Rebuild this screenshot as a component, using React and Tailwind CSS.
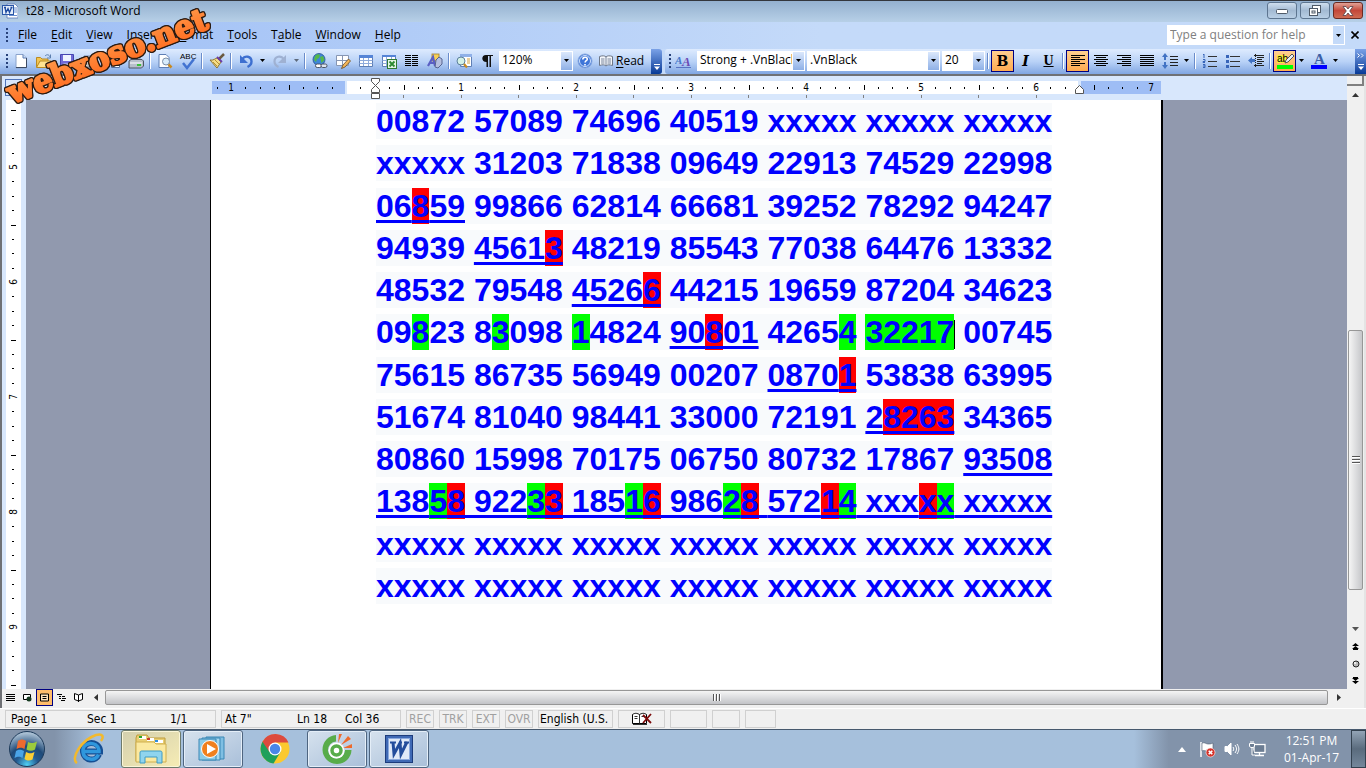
import React from 'react';

const Red = ({ children }) => <span className="bg-[#ff0000]">{children}</span>;
const Green = ({ children }) => <span className="bg-[#00ff00]">{children}</span>;
const Under = ({ children }) => (
  <span className="underline decoration-[3px] underline-offset-[3px] [text-decoration-skip-ink:none]">{children}</span>
);

const LINES = [
  <>00872 57089 74696 40519 xxxxx xxxxx xxxxx</>,
  <>xxxxx 31203 71838 09649 22913 74529 22998</>,
  <><Under>06<Red>8</Red>59</Under> 99866 62814 66681 39252 78292 94247</>,
  <>94939 <Under>4561<Red>3</Red></Under> 48219 85543 77038 64476 13332</>,
  <>48532 79548 <Under>4526<Red>6</Red></Under> 44215 19659 87204 34623</>,
  <>
    09<Green>8</Green>23 8<Green>3</Green>098 <Green>1</Green>4824 <Under>90<Red>8</Red>01</Under> 4265<Green>4</Green>{' '}
    <Green>32217</Green><span className="-mr-px inline-block h-[29px] w-px bg-black align-[-6px]" /> 00745
  </>,
  <>75615 86735 56949 00207 <Under>0870<Red>1</Red></Under> 53838 63995</>,
  <>51674 81040 98441 33000 72191 <Under>2<Red>8263</Red></Under> 34365</>,
  <>80860 15998 70175 06750 80732 17867 <Under>93508</Under></>,
  <Under>
    138<Green>5</Green><Red>8</Red> 922<Green>3</Green><Red>3</Red> 185<Green>1</Green><Red>6</Red> 986<Green>2</Green><Red>8</Red>{' '}
    572<Red>1</Red><Green>4</Green> xxx<Red>x</Red><Green>x</Green> xxxxx
  </Under>,
  <>xxxxx xxxxx xxxxx xxxxx xxxxx xxxxx xxxxx</>,
  <>xxxxx xxxxx xxxxx xxxxx xxxxx xxxxx xxxxx</>,
];

/* ---------- icons ---------- */

const Icon = ({ children, size = 16 }) => (
  <svg width={size} height={size} viewBox="0 0 16 16" fill="none" aria-hidden="true" className="shrink-0">
    {children}
  </svg>
);

const WordIcon = ({ size = 16 }) => (
  <Icon size={size}>
    <path d="M5 1h8l3 3v11H5z" fill="#fff" stroke="#5b7ab8" strokeWidth=".8" />
    <path d="M12 5h3M12 7h3M12 9h3M7 12.500h8" stroke="#6a8fd0" />
    <rect x=".5" y="2.500" width="11" height="9" fill="#e4edfb" stroke="#2b57a8" />
    <path d="M2 4.500h2M3 4.500l1 5 2-4 1.500 4 2-5M8.500 4.500h2" stroke="#1d4aa0" strokeWidth="1.300" />
  </Icon>
);

const NewDoc = () => (
  <Icon>
    <path d="M3 1.500h7l3.500 3.500v10H3z" fill="#fff" stroke="#8aa3cc" />
    <path d="M10 1.500V5h3.500" fill="#cbdcf5" stroke="#5f7fb5" />
    <path d="M13.500 5v9.500H3" stroke="#3d4a63" />
  </Icon>
);
const OpenFolder = () => (
  <Icon>
    <path d="M.5 14V4.500h4L6 6h6v3" fill="#f3c552" stroke="#b98a22" />
    <path d="M.5 14.500L4 8h11.500L12 14.500z" fill="#ffe391" stroke="#b98a22" />
    <path d="M9 3c2-2 4-1.500 5 1M14.500 1.500V5H11" stroke="#5c7fae" />
  </Icon>
);
const Save = () => (
  <Icon>
    <path d="M1.500 1.500h13v13h-12l-1-1z" fill="#6f6ad6" stroke="#4545b0" />
    <path d="M4 2h8v6H4z" fill="#eef3ff" />
    <path d="M4.500 10.500h7v4h-7z" fill="#c7cdea" />
    <path d="M9 11h2v3H9z" fill="#35359a" />
  </Icon>
);
const Mail = () => (
  <Icon>
    <path d="M2 3h9v11H2z" fill="#fff" stroke="#7086b0" />
    <path d="M6 8h9v6H6z" fill="#f5f0df" stroke="#8a8a8a" />
    <path d="M6 8l4.500 4L15 8" stroke="#8a8a8a" />
    <circle cx="12" cy="7" r="2.500" fill="#d83a20" />
  </Icon>
);
const Copies = () => (
  <Icon>
    <path d="M1.500 2.500h8v9h-8z" fill="#fff" stroke="#55709f" />
    <path d="M6.500 5.500h8v9h-8z" fill="#fff" stroke="#55709f" />
    <path d="M8 8.500h5M8 10.500h5M8 12.500h5" stroke="#5f8fe0" />
  </Icon>
);
const Printer = () => (
  <Icon>
    <path d="M5 1.500h8L11 8H3z" fill="#fff" stroke="#6b83ad" />
    <path d="M6 3.500h5M5.500 5.500h5" stroke="#8aa7dc" />
    <path d="M1 8l2-1.500h11L15.500 8v5l-2 2H1z" fill="#b7bfcb" stroke="#4d5564" />
    <path d="M2 10h12" stroke="#fff" />
    <path d="M9 12h4" stroke="#38c238" strokeWidth="2" />
  </Icon>
);
const Preview = () => (
  <Icon>
    <path d="M2 1.500h7L12 4.500v10H2z" fill="#fff" stroke="#5f7fb5" />
    <circle cx="9" cy="8.500" r="3.500" fill="#d9ecfb" stroke="#7d8fa6" />
    <path d="M11.500 11.500l3 3" stroke="#c98a20" strokeWidth="2.500" />
  </Icon>
);
const Spelling = () => (
  <svg width="18" height="18" viewBox="0 0 18 18" fill="none" aria-hidden="true">
    <text x="1" y="7" fontSize="8" fontFamily="Liberation Sans, sans-serif" fill="#000">ABC</text>
    <path d="M4 11l4 5 7-9" stroke="#4273d1" strokeWidth="2.500" />
  </svg>
);
const Brush = () => (
  <Icon>
    <path d="M15 1l-5 5" stroke="#6b5a3f" strokeWidth="2.500" />
    <path d="M1 7c3 1 6-2 7-2l4 4c-1 2-3 4-4 6z" fill="#f5dd8a" stroke="#8e7532" />
    <path d="M8 4l5 5" stroke="#6b3fa8" strokeWidth="1.800" />
    <path d="M4 9l4 4M6 7l4 4" stroke="#b8912f" />
  </Icon>
);
const Undo = () => (
  <Icon>
    <path d="M4 6.500c3-4.500 9.500-3.500 9.500 2 0 2.500-2 4.500-4 5.500" stroke="#3d6fd0" strokeWidth="2.400" />
    <path d="M2 2v8h8z" fill="#3d6fd0" />
  </Icon>
);
const Redo = () => (
  <Icon>
    <path d="M12 6.500C9 2 2.500 3 2.500 8.500c0 2.500 2 4.500 4 5.500" stroke="#9fb1d2" strokeWidth="2.200" />
    <path d="M14 2v8H6z" fill="#9fb1d2" />
  </Icon>
);
const Globe = () => (
  <Icon>
    <circle cx="7" cy="6.500" r="6" fill="#3f86d8" stroke="#23508f" strokeWidth=".8" />
    <path d="M3 3c2-2 4-2 5-1l-1 3-2 1-1 3-2-2zM8 4l3-1 1.500 4-3 3z" fill="#55b848" />
    <rect x="3.500" y="11" width="6" height="3.500" rx="1.700" fill="#fff" stroke="#4d5564" />
    <rect x="9" y="11" width="6" height="3.500" rx="1.700" fill="#dfe6f0" stroke="#4d5564" />
  </Icon>
);
const GridBase = () => (
  <>
    <path d="M1.500 2.500h13v11h-13z" fill="#fff" stroke="#5f7fb5" />
    <path d="M1.500 7.500h13M1.500 10.500h13M5.500 3v10M10.500 3v10" stroke="#8fabdb" />
  </>
);
const TablesBorders = () => (
  <Icon>
    <path d="M1.500 2.500h12v10h-12z" fill="#fff" stroke="#8796b3" />
    <path d="M1.500 7.500h12M7.500 3v9" stroke="#8796b3" />
    <path d="M13.500 6L8 12l-1.500 3.500L10 14l5.500-6z" fill="#f4b65a" stroke="#6b4a1d" strokeWidth=".8" />
  </Icon>
);
const TableIcon = () => (
  <Icon>
    <GridBase />
    <path d="M1 2h14v3H1z" fill="#5584d6" />
  </Icon>
);
const ExcelIcon = () => (
  <Icon>
    <GridBase />
    <path d="M1 2h14v2H1z" fill="#5584d6" />
    <rect x="6.500" y="6.500" width="9" height="9" fill="#e5f5e4" stroke="#2f7a33" />
    <path d="M8.500 8.500l5 5M13.500 8.500l-5 5" stroke="#2c8a31" strokeWidth="1.800" />
  </Icon>
);
const Columns = () => (
  <Icon>
    <path d="M1 2.500h6M1 4.500h6M1 6.500h6M1 8.500h6M1 10.500h6M1 12.500h6M8 2.500h6M8 4.500h6M8 6.500h6M8 8.500h6M8 10.500h6M8 12.500h6" stroke="#000" />
  </Icon>
);
const Drawing = () => (
  <Icon>
    <rect x="5" y="1" width="7" height="7" fill="#f6cf58" stroke="#a5822a" strokeWidth=".8" />
    <path d="M1 13L6 4l2 9M3 10h5" stroke="#5a5fc4" strokeWidth="2.200" />
    <path d="M9 7l3-3 3 2v5l-4 4-3-1z" fill="#b5bfdf" stroke="#56638f" />
  </Icon>
);
const DocMap = () => (
  <Icon>
    <path d="M4.500 1.500h11v12h-11z" fill="#fff" stroke="#5f7fb5" />
    <path d="M4 1h12v3H4z" fill="#8fb0e8" />
    <path d="M11 6h3M11 8h3M11 10h3" stroke="#d6a13b" />
    <circle cx="5" cy="8" r="4" fill="#d4f1e6" stroke="#5b7f9b" />
    <path d="M8 11l3 3.500" stroke="#c98a20" strokeWidth="2.200" />
  </Icon>
);
const Pilcrow = () => (
  <Icon>
    <path d="M7 2h7v1h-2v11h-1.500V3H9v11H7.500V9C2 9 2 2 7 2z" fill="#111" />
  </Icon>
);
const Help = () => (
  <Icon>
    <circle cx="8" cy="8" r="7" fill="#3f75d8" stroke="#8aa9de" />
    <circle cx="8" cy="8" r="5.500" stroke="#cfe0fb" />
    <path d="M5.800 6.500c0-3 4.500-3 4.500-.3 0 1.500-2.200 1.600-2.200 3.300M8 11v1.500" stroke="#fff" strokeWidth="1.600" />
  </Icon>
);
const Book = () => (
  <Icon>
    <path d="M1.500 3.500c3-1 5-1 6.500.5 1.500-1.500 3.500-1.500 6.500-.5v9c-3-1-5-1-6.500.5-1.500-1.500-3.500-1.500-6.500-.5z" fill="#f5f7fb" stroke="#6d7686" />
    <path d="M8 4v9M3 6h3.500M3 8h3.500M3 10h3.500M9.500 6H13M9.500 8H13M9.500 10H13" stroke="#78859b" />
  </Icon>
);
const StylesIcon = () => (
  <svg width="17" height="16" viewBox="0 0 17 16" fill="none" aria-hidden="true">
    <text x="0" y="11" fontSize="11" fontStyle="italic" fontWeight="bold" fontFamily="Liberation Serif, serif" fill="#4778c9">A</text>
    <text x="7" y="13" fontSize="13" fontStyle="italic" fontWeight="bold" fontFamily="Liberation Serif, serif" fill="#6c4bb5">A</text>
    <path d="M1 14.500h15" stroke="#5873c4" />
  </svg>
);
const AlignLeft = () => (
  <Icon><path d="M1 2.500h14M1 4.500h9M1 6.500h14M1 8.500h9M1 10.500h14M1 12.500h9" stroke="#000" /></Icon>
);
const AlignCenter = () => (
  <Icon><path d="M1 2.500h14M3 4.500h10M1 6.500h14M3 8.500h10M1 10.500h14M3 12.500h10" stroke="#000" /></Icon>
);
const AlignRight = () => (
  <Icon><path d="M1 2.500h14M6 4.500h9M1 6.500h14M6 8.500h9M1 10.500h14M6 12.500h9" stroke="#000" /></Icon>
);
const Justify = () => (
  <Icon><path d="M1 2.500h14M1 4.500h14M1 6.500h14M1 8.500h14M1 10.500h14M1 12.500h14" stroke="#000" /></Icon>
);
const LineSpacing = () => (
  <Icon>
    <path d="M3 0L0 4h2v3h2V4h2zM3 16l-3-4h2V9h2v3h2z" fill="#4273c4" />
    <path d="M8 3.500h8M8 6.500h8M8 9.500h8M8 12.500h8" stroke="#222" />
  </Icon>
);
const Numbering = () => (
  <Icon>
    <path d="M2 1v4M1 1.500h1M1 6.500h2v2H1v1h2M1 11.500h2v3H1M1 13h2" stroke="#3764b8" />
    <path d="M6 3.500h9M6 8.500h9M6 13.500h9" stroke="#333" />
  </Icon>
);
const Bullets = () => (
  <Icon>
    <path d="M1 2h3v3H1zM1 7h3v3H1zM1 12h3v3H1z" fill="#3764b8" />
    <path d="M5 3.500h10M5 8.500h10M5 13.500h10" stroke="#333" />
  </Icon>
);
const Outdent = () => (
  <Icon>
    <path d="M6 2.500h10M9 4.500h7M9 6.500h5M9 8.500h7M9 10.500h5M6 12.500h10" stroke="#222" />
    <path d="M7.500 1v14" stroke="#222" strokeDasharray="1 1" />
    <path d="M0 7.500L4 4v2h3v3H4v2z" fill="#4273c4" />
  </Icon>
);
const Highlighter = () => (
  <svg width="18" height="18" viewBox="0 0 18 18" fill="none" aria-hidden="true">
    <path d="M1 3h9v8H1z" fill="#f8f03a" />
    <text x="1" y="10" fontSize="10" fontFamily="Liberation Sans, sans-serif" fill="#000">ab</text>
    <path d="M16 2l-6 6-1 3 3-1 6-6z" fill="#e8edf5" stroke="#555" />
    <path d="M1 13h16v4H1z" fill="#00ff00" />
  </svg>
);
const FontColor = () => (
  <svg width="18" height="18" viewBox="0 0 18 18" fill="none" aria-hidden="true">
    <text x="4" y="12" fontSize="15" fontWeight="bold" fontFamily="Liberation Serif, serif" fill="#3c5fa6">A</text>
    <path d="M1 13h16v4H1z" fill="#0000ff" />
  </svg>
);
const Down = () => (
  <svg width="5" height="3" viewBox="0 0 5 3" aria-hidden="true"><path d="M0 0h5L2.500 3z" fill="#000" /></svg>
);

/* ---------- toolbar parts ---------- */

const Tool = ({ label, active, children }) => (
  <button
    aria-label={label}
    className={`flex h-[22px] w-[23px] shrink-0 items-center justify-center text-base ${active ? 'border border-[#000080] bg-gradient-to-b from-[#ffcf8f] to-[#ffab4f]' : ''}`}
  >
    {children}
  </button>
);
const Drop = ({ label, dim }) => (
  <button aria-label={label} className={`flex h-[22px] w-[11px] shrink-0 items-center justify-center ${dim ? 'opacity-50' : ''}`}><Down /></button>
);
const Sep = () => (
  <div className="flex w-[6px] shrink-0 justify-center"><div className="h-4 w-[2px] border-l border-[#6a8ccb] bg-white" /></div>
);
const Grip = () => (
  <div className="flex w-[3px] shrink-0 flex-col gap-[2px]">
    {[0, 1, 2, 3].map((i) => <div key={i} className="size-[2px] bg-[#27417a]" />)}
  </div>
);
const Combo = ({ label, value, width }) => (
  <div className={`relative h-5 shrink-0 ${width}`}>
    <select aria-label={label} className="block h-5 w-full appearance-none overflow-hidden bg-white pr-[13px] pb-[2px] pl-[3px] text-xs text-black">
      <option>{value}</option>
    </select>
    <span className="pointer-events-none absolute top-px right-px bottom-px flex w-[11px] items-center justify-center bg-gradient-to-b from-[#dbe8fc] to-[#8fb0e6]">
      <Down />
    </span>
  </div>
);

const MENU = [['', 'F', 'ile'], ['', 'E', 'dit'], ['', 'V', 'iew'], ['', 'I', 'nsert'], ['F', 'o', 'rmat'], ['', 'T', 'ools'], ['T', 'a', 'ble'], ['', 'W', 'indow'], ['', 'H', 'elp']];

function TitleBar() {
  return (
    <header className="flex h-[22px] items-start border-t border-[#33363c] bg-gradient-to-b from-[#94b0cf] to-[#b7d0e7] pl-[2px]">
      <div className="flex h-5 items-center gap-2">
        <WordIcon />
        <h1 className="text-xs">t28 - Microsoft Word</h1>
      </div>
      <div className="mt-px mr-[3px] ml-auto flex gap-[3px]">
        <button aria-label="Minimize" className="flex h-[17px] w-[30px] items-center justify-center rounded-[3px] border border-[#5d7590] bg-gradient-to-b from-[#cfdeee] via-[#a3bad3] to-[#b9cfe5]">
          <svg width="12" height="6" viewBox="0 0 12 6"><rect x=".5" y="1.500" width="11" height="4" rx="1" fill="#fff" stroke="#4f5a68" /></svg>
        </button>
        <button aria-label="Restore" className="flex h-[17px] w-[30px] items-center justify-center rounded-[3px] border border-[#5d7590] bg-gradient-to-b from-[#cfdeee] via-[#a3bad3] to-[#b9cfe5]">
          <svg width="12" height="12" viewBox="0 0 12 12" fill="#fff" stroke="#4f5a68">
            <rect x="3.500" y=".5" width="8" height="7" />
            <rect x=".5" y="3.500" width="8" height="7" />
            <rect x="3" y="6" width="3" height="2" />
          </svg>
        </button>
        <button aria-label="Close" className="flex h-[17px] w-[30px] items-center justify-center rounded-[3px] border border-[#6b2a22] bg-gradient-to-b from-[#e0a096] via-[#c3473a] to-[#cf6a52]">
          <svg width="12" height="10" viewBox="0 0 12 10"><path d="M1 .5h3l2 2.500 2-2.500h3L7.700 5 11 9.500H8L6 7 4 9.500H1L4.300 5z" fill="#fff" stroke="#564048" strokeWidth=".8" /></svg>
        </button>
      </div>
    </header>
  );
}

function MenuBar() {
  return (
    <nav className="flex h-[27px] items-center bg-gradient-to-r from-[#9ebef5] to-[#c4daf9] to-60% pb-px pl-[6px]">
      <Grip />
      <div className="ml-2 flex">
        {MENU.map(([a, b, c]) => (
          <button key={a + b + c} className="mr-3 px-px text-xs">{a}<span className="underline underline-offset-2">{b}</span>{c}</button>
        ))}
      </div>
      <div className="relative mr-[2px] ml-auto flex h-5 w-[178px]">
        <input aria-label="Type a question for help" placeholder="Type a question for help" className="w-full bg-white pl-[3px] text-xs placeholder:text-[#808080]" />
        <span className="absolute top-px right-px bottom-px flex w-[11px] items-center justify-center bg-[#c4daf9]"><Down /></span>
      </div>
      <button aria-label="Close document" className="mr-[3px] p-1">
        <svg width="8" height="8" viewBox="0 0 8 8"><path d="M.5 .5l7 7M7.500 .5l-7 7" stroke="#000" strokeWidth="1.600" /></svg>
      </button>
    </nav>
  );
}

function Toolbars() {
  return (
    <div className="flex h-[25px] bg-[#c4daf9]">
      <div role="toolbar" aria-label="Standard" className="flex w-[662px] shrink-0 items-center overflow-hidden rounded-r-[3px] bg-gradient-to-b from-[#deebfe] via-[#b9d2f7] to-[#81a6e2] pl-[6px]">
        <div className="flex items-center pb-[2px]">
          <Grip />
          <Tool label="New"><NewDoc /></Tool>
          <Tool label="Open"><OpenFolder /></Tool>
          <Tool label="Save"><Save /></Tool>
          <Tool label="Permission"><Mail /></Tool>
          <Tool label="E-mail"><Copies /></Tool>
          <Tool label="Print"><Printer /></Tool>
          <Sep />
          <Tool label="Print Preview"><Preview /></Tool>
          <Tool label="Spelling"><Spelling /></Tool>
          <Sep />
          <Tool label="Format Painter"><Brush /></Tool>
          <Sep />
          <Tool label="Undo"><Undo /></Tool>
          <Drop label="Undo list" />
          <Tool label="Redo"><Redo /></Tool>
          <Drop label="Redo list" dim />
          <Sep />
          <Tool label="Hyperlink"><Globe /></Tool>
          <Tool label="Tables and Borders"><TablesBorders /></Tool>
          <Tool label="Insert Table"><TableIcon /></Tool>
          <Tool label="Insert Worksheet"><ExcelIcon /></Tool>
          <Tool label="Columns"><Columns /></Tool>
          <Tool label="Drawing"><Drawing /></Tool>
          <Sep />
          <Tool label="Document Map"><DocMap /></Tool>
          <Tool label="Show Paragraph Marks"><Pilcrow /></Tool>
          <Combo label="Zoom" value="120%" width="w-[74px] ml-px" />
          <Tool label="Help"><Help /></Tool>
          <button className="ml-[2px] flex shrink-0 items-center gap-[2px] text-xs"><Book /><span><span className="underline underline-offset-2">R</span>ead</span></button>
        </div>
        <button aria-label="Standard options" className="ml-auto flex h-full w-[11px] shrink-0 items-end justify-center bg-gradient-to-b from-[#7ba2e7] to-[#063a97] pb-1">
          <svg width="6" height="6" viewBox="0 0 6 6"><path d="M0 .5h6" stroke="#fff" /><path d="M0 2.500h6L3 6z" fill="#fff" /></svg>
        </button>
      </div>
      <div role="toolbar" aria-label="Formatting" className="ml-[3px] flex flex-1 items-center overflow-hidden rounded-l-[3px] bg-gradient-to-b from-[#deebfe] via-[#b9d2f7] to-[#81a6e2] pl-1">
        <div className="flex items-center pb-[2px]">
          <Grip />
          <Tool label="Styles and Formatting"><StylesIcon /></Tool>
          <Combo label="Style" value="Strong + .VnBlack" width="w-[108px] ml-[2px]" />
          <Combo label="Font" value=".VnBlack" width="w-[133px] ml-[2px]" />
          <Combo label="Font Size" value="20" width="w-[43px] ml-[2px]" />
          <Sep />
          <Tool label="Bold" active><span className="font-['DejaVu_Serif',serif] text-sm font-bold">B</span></Tool>
          <Tool label="Italic"><span className="font-['DejaVu_Serif',serif] text-sm font-bold italic">I</span></Tool>
          <Tool label="Underline"><span className="font-['Liberation_Serif',serif] text-sm font-bold underline">U</span></Tool>
          <Sep />
          <Tool label="Align Left" active><AlignLeft /></Tool>
          <Tool label="Center"><AlignCenter /></Tool>
          <Tool label="Align Right"><AlignRight /></Tool>
          <Tool label="Justify"><Justify /></Tool>
          <Tool label="Line Spacing"><LineSpacing /></Tool>
          <Drop label="Line Spacing list" />
          <Sep />
          <Tool label="Numbering"><Numbering /></Tool>
          <Tool label="Bullets"><Bullets /></Tool>
          <Tool label="Decrease Indent"><Outdent /></Tool>
          <Sep />
          <Tool label="Highlight" active><Highlighter /></Tool>
          <Drop label="Highlight list" />
          <Tool label="Font Color"><FontColor /></Tool>
          <Drop label="Font Color list" />
        </div>
        <button aria-label="Formatting options" className="ml-auto flex h-full w-[11px] shrink-0 flex-col items-center justify-between bg-gradient-to-b from-[#7ba2e7] to-[#063a97] py-1">
          <svg width="7" height="5" viewBox="0 0 7 5" fill="none" stroke="#fff"><path d="M.5 .5l2 2-2 2M4 .5l2 2-2 2" /></svg>
          <svg width="6" height="6" viewBox="0 0 6 6"><path d="M0 .5h6" stroke="#fff" /><path d="M0 2.500h6L3 6z" fill="#fff" /></svg>
        </button>
      </div>
    </div>
  );
}

/* ---------- rulers: 115px to the inch, a tick each eighth ---------- */

const INCH = 115;

function HorizontalRuler() {
  const eighths = Array.from({ length: 66 }, (_, i) => i - 9);
  return (
    <svg width="953" height="24" viewBox="0 0 953 24" shapeRendering="crispEdges" className="shrink-0" aria-label="Horizontal ruler">
      <rect x="2" y="5" width="133" height="13" fill="#9ebdf5" />
      <rect x="137" y="5" width="731" height="13" fill="#fff" />
      <rect x="871" y="5" width="80" height="13" fill="#9ebdf5" />
      {eighths.map((i) => {
        const x = Math.round(136 + (i * INCH) / 8);
        // the indent markers and the margin edge hide the ticks under them
        if (i === 0 || x < 4 || x > 949 || (x > 155 && x < 172) || (x > 862 && x < 880)) return null;
        if (i % 8 === 0) {
          return <text key={i} x={x} y="15" textAnchor="middle" fontSize="10" fontFamily="DejaVu Sans Condensed, DejaVu Sans, sans-serif">{Math.abs(i / 8)}</text>;
        }
        return i % 4 === 0
          ? <rect key={i} x={x} y="9" width="1" height="5" />
          : <rect key={i} x={x} y="11" width="1" height="2" />;
      })}
      {Array.from({ length: 12 }, (_, i) => (
        <rect key={i} x={Math.round(193 + (i * INCH) / 2)} y="19" width="1" height="3" fill="#808080" />
      ))}
      <g fill="#fff" stroke="#555" shapeRendering="auto">
        <path d="M161.500 2.500h8v3l-4 4 4 4v3h-8v-3l4-4-4-4z" />
        <path d="M161.500 17.500h8v5h-8z" />
        <path d="M865.500 17.500v-4l4-4 4 4v4z" />
      </g>
    </svg>
  );
}

function VerticalRuler() {
  return (
    <div className="w-6 shrink-0 overflow-hidden bg-[#d8e7fc] pl-1">
      <div className="h-full w-[15px] bg-white">
        <svg width="15" height="588" viewBox="0 0 15 588" shapeRendering="crispEdges" aria-label="Vertical ruler">
          {Array.from({ length: 41 }, (_, i) => i - 4).map((i) => {
            const y = Math.round(67 + (i * INCH) / 8);
            if (i % 8 === 0) {
              return (
                <text key={i} transform={`translate(11 ${y}) rotate(-90)`} textAnchor="middle" fontSize="10" fontFamily="DejaVu Sans Condensed, DejaVu Sans, sans-serif">
                  {5 + i / 8}
                </text>
              );
            }
            return i % 4 === 0
              ? <rect key={i} x="5" y={y} width="5" height="1" />
              : <rect key={i} x="6" y={y} width="2" height="1" />;
          })}
        </svg>
      </div>
    </div>
  );
}

function VerticalScroll() {
  return (
    <div className="flex w-[17px] shrink-0 flex-col items-center bg-[#f0f0f0]">
      <div className="h-[10px] w-full border-r-2 border-b-2 border-[#808080] bg-[#f0f0f0]" />
      <button aria-label="Scroll up" className="flex h-[18px] w-full items-center justify-center">
        <svg width="7" height="4" viewBox="0 0 7 4"><path d="M0 4h7L3.500 0z" fill="#333" /></svg>
      </button>
      <div className="flex-[227]" />
      <div className="flex w-[15px] flex-[259] flex-col items-center justify-center gap-px rounded-[2px] border border-[#979797] bg-gradient-to-r from-[#f5f5f5] to-[#c6c7ca]">
        {[0, 1, 2].map((i) => <div key={i} className="h-[2px] w-2 border-b border-white bg-[#555]" />)}
      </div>
      <div className="flex-[30]" />
      <button aria-label="Scroll down" className="flex h-[18px] w-full items-center justify-center">
        <svg width="7" height="4" viewBox="0 0 7 4"><path d="M0 0h7L3.500 4z" fill="#555" /></svg>
      </button>
      <button aria-label="Previous page" className="flex h-[17px] items-center">
        <svg width="7" height="7" viewBox="0 0 7 7"><path d="M0 3h7L3.500 0zM0 6h7L3.500 3zM1 6h5v1H1z" /></svg>
      </button>
      <button aria-label="Select browse object" className="flex h-[17px] items-center">
        <svg width="8" height="8" viewBox="0 0 8 8"><circle cx="4" cy="4" r="3" fill="#bbb" stroke="#222" /><circle cx="3" cy="3" r="1" fill="#fff" /></svg>
      </button>
      <button aria-label="Next page" className="mb-[19px] flex h-[17px] items-center">
        <svg width="7" height="7" viewBox="0 0 7 7"><path d="M0 1h7L3.500 4zM0 4h7L3.500 7zM1 0h5v1H1z" /></svg>
      </button>
    </div>
  );
}

function HorizontalScroll() {
  return (
    <div className="flex h-[19px] shrink-0 items-start bg-[#f0f0f0]">
      <button aria-label="Normal view" className="flex size-[17px] items-center justify-center">
        <svg width="9" height="9" viewBox="0 0 9 9"><path d="M0 1.500h9M0 3.500h9M0 5.500h9M0 7.500h9" stroke="#000" /></svg>
      </button>
      <button aria-label="Web layout" className="flex size-[17px] items-center justify-center">
        <svg width="9" height="9" viewBox="0 0 9 9"><path d="M.5 1.500h7v5h-7z" fill="#fff" stroke="#000" /><circle cx="6" cy="6" r="2.500" fill="#163a20" /></svg>
      </button>
      <button aria-label="Print layout" className="flex size-[17px] items-center justify-center border border-[#000080] bg-[#ffbd6b]">
        <svg width="9" height="9" viewBox="0 0 9 9"><path d="M.5 1h8v7h-8z" fill="#ffe2bb" stroke="#000" /><path d="M2.500 3.500h4M2.500 5.500h4" stroke="#000" /></svg>
      </button>
      <button aria-label="Outline view" className="flex size-[17px] items-center justify-center">
        <svg width="9" height="9" viewBox="0 0 9 9"><path d="M0 1.500h5M2 3.500h2M5 3.500h3M2 5.500h2M5 5.500h4M4 7.500h4" stroke="#000" /></svg>
      </button>
      <button aria-label="Reading layout" className="flex size-[17px] items-center justify-center">
        <svg width="9" height="9" viewBox="0 0 9 9" fill="#fff" stroke="#000"><path d="M.5 .5l4 1.500 4-1.500v6l-4 1.500-4-1.500zM4.500 2v7" /></svg>
      </button>
      <button aria-label="Scroll left" className="flex size-[17px] items-center justify-center">
        <svg width="4" height="7" viewBox="0 0 4 7"><path d="M4 0v7L0 3.500z" fill="#333" /></svg>
      </button>
      <div className="mt-px ml-px flex h-[15px] flex-1 items-center justify-center gap-px rounded-[2px] border border-[#979797] bg-gradient-to-b from-[#f5f5f5] via-[#dcdddf] to-[#c2c3c7]">
        {[0, 1, 2].map((i) => <div key={i} className="h-[7px] w-[2px] border-r border-white bg-[#555]" />)}
      </div>
      <button aria-label="Scroll right" className="ml-[2px] flex size-[17px] items-center justify-center">
        <svg width="4" height="7" viewBox="0 0 4 7"><path d="M0 0v7l4-3.500z" fill="#333" /></svg>
      </button>
    </div>
  );
}

function StatusBar() {
  const box = 'flex h-[18px] shrink-0 items-center border border-[#d0d0d0]';
  return (
    <footer className="flex h-[21px] shrink-0 items-center gap-[5px] border-t border-white bg-[#f0f0f0] pl-[5px] font-['DejaVu_Sans_Condensed','DejaVu_Sans',sans-serif] text-xs text-black">
      <div className={`${box} w-[211px] pl-[5px]`}>
        <span className="w-[76px]">Page 1</span>
        <span className="w-[83px]">Sec 1</span>
        <span>1/1</span>
      </div>
      <div className={`${box} w-[180px] pl-[3px]`}>
        <span className="w-[72px]">At 7"</span>
        <span className="w-[48px]">Ln 18</span>
        <span>Col 36</span>
      </div>
      {['REC', 'TRK', 'EXT', 'OVR'].map((t) => (
        <button key={t} className={`${box} w-7 justify-center text-[#a0a0a0]`}>{t}</button>
      ))}
      <div className={`${box} w-[75px] pl-px whitespace-nowrap`}>English (U.S.</div>
      <div className={`${box} w-[47px] justify-center`}>
        <svg width="22" height="14" viewBox="0 0 22 14" fill="none" aria-label="Spelling status">
          <path d="M1.500 2.500c3-2 5-1 7 0 2-1 4-2 7 0v9h-14z" fill="#fff" stroke="#000" />
          <path d="M8.500 2.500v9M3.500 4.500h3M3.500 6.500h3M10.500 4.500h3M2 12.500h14" stroke="#333" />
          <path d="M12 3l8 8M20 2l-8 9" stroke="#7c0a0a" strokeWidth="1.800" />
        </svg>
      </div>
      <div className={`${box} w-[37px]`} />
      <div className={`${box} w-7`} />
      <div className={`${box} w-[31px]`} />
    </footer>
  );
}

/* ---------- taskbar ---------- */

const TaskButton = ({ label, warm, plain, children }) => (
  <button
    aria-label={label}
    className={`flex h-[38px] w-[60px] items-center justify-center rounded-[3px] border ${
      plain ? 'border-transparent' : warm ? 'border-[#6d7a6b] bg-gradient-to-br from-[#d3cfae] to-[#f6ecb4] shadow-[inset_0_0_0_1px_#fbf6d8]' : 'border-[#4e6580] bg-gradient-to-br from-[#d6e2ee] to-[#a9bfd9] shadow-[inset_0_0_0_1px_#e4eef8]'
    }`}
  >
    {children}
  </button>
);

function Taskbar() {
  return (
    <div className="flex h-[39px] shrink-0 items-center border-t border-[#46586d] bg-gradient-to-r from-[#8293aa] from-4% via-[#a6c0dc] via-7% to-[#a6c0dc]">
      <button aria-label="Start" className="ml-2 flex size-[38px] items-center justify-center">
        <svg width="38" height="38" viewBox="0 0 38 38">
          <defs>
            <radialGradient id="orb" cx=".5" cy=".95" r=".9">
              <stop offset="0" stopColor="#4fd0f5" /><stop offset=".35" stopColor="#24598f" /><stop offset=".6" stopColor="#1f4a78" /><stop offset="1" stopColor="#a9bfd3" />
            </radialGradient>
          </defs>
          <circle cx="19" cy="19" r="17.500" fill="url(#orb)" stroke="#1d3a5a" />
          <path d="M10 11c3-2 5-2 8 0l-1.500 8c-3-2-5-1.500-8 0z" fill="#ee6a2f" />
          <path d="M20 12c3 1.500 5 1.500 9-.5l-2 8c-3 2-6 1.500-8.500 0z" fill="#9bcb3c" />
          <path d="M8 21c3-2 5-1.500 8 0l-1.500 7c-3-2-5-1.500-8 0z" fill="#4aa4e8" />
          <path d="M18 22c3 1.500 5 2 8.500 0l-2 7.500c-3 1.500-5 1.500-8-.5z" fill="#fbce35" />
        </svg>
      </button>
      <div className="ml-[13px] flex gap-[2px]">
        <TaskButton label="Internet Explorer" plain>
          <svg width="32" height="32" viewBox="0 0 32 32" fill="none">
            <path d="M26 21.500c-3 7.500-15 6.500-16-2.500-1-11 15-12 17-2v1.500H11" stroke="#164f94" strokeWidth="6" />
            <path d="M25.500 21.500c-3 7-14.500 6-15.500-2.500-1-10.500 14-11.500 16-2v1.500H11" stroke="#2f97dd" strokeWidth="3.500" />
            <path d="M4 30C-3 26 8 7 23 2c7-2 8 2 5 6" stroke="#f2b92d" strokeWidth="2.500" />
          </svg>
        </TaskButton>
        <TaskButton label="Windows Explorer" warm>
          <svg width="34" height="32" viewBox="0 0 34 32">
            <path d="M2 5l1-3h10l2 3h16v23H2z" fill="#e9cf72" stroke="#bf9d3d" />
            <path d="M5 3h7v3H5z" fill="#fff" /><path d="M5 3h3v2H5z" fill="#2aa52a" />
            <path d="M13 5h7v3h-7z" fill="#fff" /><path d="M13 5h3v2h-3z" fill="#c8352b" />
            <path d="M21 7h8v3h-8z" fill="#fff" /><path d="M21 7h3v2h-3z" fill="#2f8de0" />
            <path d="M2 9h18l2 2h10v18H2z" fill="#fbe9a0" stroke="#d0b050" />
            <path d="M6 30V20c0-2 1-2 2-2h18c2 0 2 1 2 2v10h-5v-6H11v6z" fill="#8fd4ee" stroke="#3f9bc4" />
          </svg>
        </TaskButton>
        <TaskButton label="Media Player">
          <svg width="30" height="28" viewBox="0 0 30 28">
            <path d="M8 2h18v22H8z" fill="#7fbfe3" stroke="#3b87b5" />
            <path d="M4 3h18v22H4z" fill="#a7d8f0" stroke="#3b87b5" />
            <path d="M1 4h17v21H1z" fill="#8ccbe8" stroke="#3b87b5" />
            <circle cx="12" cy="14" r="8.500" fill="#f0801f" stroke="#fff" />
            <path d="M9 9l9 5-9 5z" fill="#fff" />
          </svg>
        </TaskButton>
        <TaskButton label="Chrome" plain>
          <svg width="30" height="30" viewBox="0 0 30 30">
            <circle cx="15" cy="15" r="14.500" fill="#fbc92f" />
            <path d="M2.500 7.700A14.500 14.500 0 0 0 13.500 29.400L20.500 18 15 9z" fill="#1fa05a" />
            <path d="M2.500 7.700L9.500 18l5.500-9.500h13.500A14.500 14.500 0 0 0 2.500 7.700z" fill="#dd4b3e" />
            <circle cx="15" cy="15" r="6.500" fill="#fff" /><circle cx="15" cy="15" r="5.200" fill="#4a86e8" />
          </svg>
        </TaskButton>
        <TaskButton label="Coc Coc">
          <svg width="32" height="32" viewBox="0 0 32 32" fill="none">
            <path d="M15 2A14.500 14.500 0 1 0 30.500 17H24a8.500 8.500 0 1 1-9-8.500z" fill="#58ac4a" />
            <circle cx="15.500" cy="17.500" r="8" fill="#fff" />
            <circle cx="15.500" cy="17.500" r="4.500" stroke="#58ac4a" strokeWidth="3.500" />
            <path d="M17 10l1-9 3 0zM20 12l7-9 3 3zM22 15l9-4v4z" fill="#ee6a2c" />
          </svg>
        </TaskButton>
        <TaskButton label="Microsoft Word">
          <svg width="28" height="28" viewBox="0 0 28 28">
            <rect x=".5" y=".5" width="27" height="27" fill="#3f69b5" stroke="#1d3c7c" />
            <rect x="3.500" y="3.500" width="21" height="21" fill="#dfe9f8" stroke="#8aa9de" />
            <path d="M5 7.500h6M14 7.500h3M19 7.500h5" stroke="#234d9c" strokeWidth="2" />
            <path d="M8 7l1 12 6-11 1 11 6-12" fill="none" stroke="#234d9c" strokeWidth="3" />
          </svg>
        </TaskButton>
      </div>
      <div className="ml-auto flex h-full items-center bg-gradient-to-r from-[#a6c0dc] to-[#8293aa] to-15% pl-[44px] text-white">
        <button aria-label="Show hidden icons" className="mr-[13px]">
          <svg width="8" height="5" viewBox="0 0 8 5"><path d="M0 5h8L4 0z" fill="#fff" /></svg>
        </button>
        <svg width="17" height="17" viewBox="0 0 17 17" className="mr-2" aria-label="Action Center">
          <path d="M2 1v15" stroke="#fff" strokeWidth="1.500" />
          <path d="M3 2c3-1 4 1 6 1s3 0 5-1v8c-3 1-4 0-6 0s-3-1-5 0z" fill="#fff" stroke="#4e5d70" strokeWidth=".6" />
          <circle cx="11.500" cy="11.500" r="4.500" fill="#d6332b" stroke="#fff" strokeWidth=".6" />
          <path d="M9.700 9.700l3.600 3.600M13.300 9.700l-3.600 3.600" stroke="#fff" strokeWidth="1.600" />
        </svg>
        <svg width="16" height="16" viewBox="0 0 16 16" className="mr-[9px]" fill="none" stroke="#fff" aria-label="Volume">
          <path d="M1 5.500h2.500L7 2v12l-3.500-3.500H1z" fill="#fff" />
          <path d="M9 6c1 1.500 1 2.500 0 4M11 4c2 3 2 5 0 8M13 3c2.500 4 2.500 6 0 10" />
        </svg>
        <svg width="17" height="16" viewBox="0 0 17 16" className="mr-[18px]" fill="none" stroke="#fff" aria-label="Network">
          <rect x="5" y="3.500" width="11" height="8" fill="#6c7d93" strokeWidth="1.300" />
          <path d="M10.500 12v2.500M6 14.500h9" strokeWidth="1.300" />
          <path d="M.5 2.500h5v3l-1.500 1h-2L.5 5.500zM2 0v2M4 0v2M3 6v8h3" fill="#6c7d93" />
        </svg>
        <div className="mr-3 text-center text-xs leading-[17px]">
          <div>12:51 PM</div>
          <div>01-Apr-17</div>
        </div>
        <button aria-label="Show desktop" className="h-full w-[15px] border border-[#33414f] bg-gradient-to-b from-[#93a4b6] via-[#5a6b7d] to-[#74879b]" />
      </div>
    </div>
  );
}

export default function App() {
  return (
    <div className="relative flex h-screen flex-col overflow-hidden bg-[#f0f0f0] font-['Open_Sans','Noto_Sans',sans-serif] text-black">
      <TitleBar />
      <MenuBar />
      <Toolbars />
      <div className="flex min-h-0 flex-1 border-t-2 border-l-2 border-[#6f7175]">
        <div className="flex min-w-0 flex-1 flex-col">
          <div className="flex h-6 shrink-0 bg-[#d8e7fc]">
            <div className="w-6 shrink-0 pt-[3px] pl-[3px]">
              <button aria-label="Tab selector" className="block size-[17px] border border-[#4f73b8] bg-[#d8e7fc]" />
            </div>
            <div className="flex flex-1 justify-center overflow-hidden"><HorizontalRuler /></div>
          </div>
          <div className="flex min-h-0 flex-1">
            <VerticalRuler />
            <main className="flex flex-1 justify-center overflow-hidden bg-[#9199ae]">
              <article className="w-[953px] shrink-0 border-r-2 border-l border-black bg-white pt-[3px] pl-[165px]">
                <div className="flex h-[501px] w-fit flex-col justify-between font-['Liberation_Sans',Arial,sans-serif] text-[32px] leading-9 font-bold whitespace-nowrap text-[#0000ff]">
                  {LINES.map((line, i) => <p key={i} className="h-9 bg-[#f8fafc]">{line}</p>)}
                </div>
              </article>
            </main>
          </div>
          <HorizontalScroll />
        </div>
        <VerticalScroll />
        <div className="w-[2px] shrink-0 bg-[#e4e4e4]" />
      </div>
      <StatusBar />
      <Taskbar />

      {/* site watermark over the window's corner */}
      <svg
        width="240"
        height="116"
        viewBox="0 0 240 116"
        aria-label="webxoso.net"
        className="pointer-events-none absolute top-0 left-0 [filter:drop-shadow(1px_0_0_#2b1a10)_drop-shadow(-1px_0_0_#2b1a10)_drop-shadow(0_1px_0_#2b1a10)_drop-shadow(0_-1px_0_#2b1a10)]"
      >
        <defs>
          <linearGradient id="flame" x1="0" y1="0" x2="0" y2="1">
            <stop offset="0" stopColor="#ff9a4a" /><stop offset="1" stopColor="#ff6a1e" />
          </linearGradient>
        </defs>
        <text
          transform="translate(12 104) rotate(-21)"
          fontSize="31"
          fontWeight="bold"
          fontFamily="DejaVu Serif, serif"
          fill="url(#flame)"
          stroke="url(#flame)"
          strokeWidth="2"
          strokeLinejoin="round"
        >
          webxoso.net
        </text>
      </svg>
    </div>
  );
}
